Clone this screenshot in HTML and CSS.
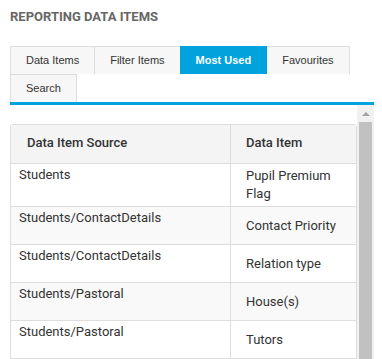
FILE: index.html
```html
<!DOCTYPE html>
<html lang="en">
<head>
  <meta charset="UTF-8"/>
  <title>Reporting Data Items</title>
  <link rel="stylesheet" href="styles.css">
</head>
<body>

  <div class="page">
    <h1 class="title">REPORTING DATA ITEMS</h1>

    <!-- tab strip -->
    <ul class="tabs">
      <li class="tab">Data Items</li>
      <li class="tab">Filter Items</li>
      <li class="tab active">Most Used</li>
      <li class="tab">Favourites</li>
      <li class="tab">Search</li>
    </ul>

    <div class="panel">
      <div class="panel-body">
        <table class="items">
          <colgroup>
            <col class="col-source">
            <col>
          </colgroup>
          <thead>
            <tr>
              <th>Data Item Source</th>
              <th>Data Item</th>
            </tr>
          </thead>
          <tbody>
            <tr>
              <td class="source">Students</td>
              <td class="item">Pupil Premium Flag</td>
            </tr>
            <tr>
              <td class="source">Students/ContactDetails</td>
              <td class="item">Contact Priority</td>
            </tr>
            <tr>
              <td class="source">Students/ContactDetails</td>
              <td class="item">Relation type</td>
            </tr>
            <tr>
              <td class="source">Students/Pastoral</td>
              <td class="item">House(s)</td>
            </tr>
            <tr>
              <td class="source">Students/Pastoral</td>
              <td class="item">Tutors</td>
            </tr>
          </tbody>
        </table>
      </div>
      <div class="scrollbar">
        <span class="scroll-up"></span>
        <span class="scroll-thumb"></span>
      </div>
    </div>
  </div>

</body>
</html>
```

FILE: styles.css
```css
html, body {
  margin: 0;
  padding: 0;
  background-color: #fff;
  overflow: hidden;
}
body {
  font-family: Roboto, Arial, sans-serif;
  color: #333;
}
.page {
  width: 364px;
  padding: 9px 8px 0 10px;
}
.title {
  margin: 0 0 21px 0;
  font-size: 13px;
  line-height: 16px;
  font-weight: 700;
  color: #666;
}

/* tabs */
.tabs {
  list-style: none;
  margin: 0;
  padding: 0;
  display: flex;
  flex-wrap: wrap;
  border-bottom: 3px solid #00a3dc;
}
.tab {
  font-family: "Liberation Sans", Arial, sans-serif;
  font-size: 11px;
  line-height: 27px;
  padding: 0 15px;
  margin-right: -1px;
  background-color: #f7f7f7;
  border: 1px solid #ddd;
  border-bottom: 0;
  color: #333;
}
.tab.active {
  background-color: #00a3dc;
  border-color: #00a3dc;
  color: #fff;
  font-weight: bold;
  position: relative;
}

/* scroll panel */
.panel {
  display: flex;
}
.panel-body {
  flex: 1;
  padding-top: 19px;
}
.scrollbar {
  width: 17px;
  height: 320px;
  background-color: #f1f1f1;
  display: flex;
  flex-direction: column;
}
.scroll-up {
  height: 17px;
  display: flex;
  align-items: center;
  justify-content: center;
}
.scroll-up::before {
  content: "";
  border-left: 4px solid transparent;
  border-right: 4px solid transparent;
  border-bottom: 4px solid #a3a3a3;
}
.scroll-thumb {
  flex: 1;
  margin: 0 2px;
  background-color: #c1c1c1;
}

/* table */
.items {
  width: 100%;
  table-layout: fixed;
  border-collapse: separate;
  border-spacing: 0;
  border: 1px solid #ddd;
  border-radius: 3px 3px 0 0;
  font-size: 13px;
  line-height: 18px;
}
.col-source {
  width: 220px;
}
.items th {
  text-align: left;
  font-weight: 500;
  padding: 9px 8px 11px 15px;
  background-color: #f4f4f4;
  border-bottom: 1px solid #ddd;
}
.items th:first-child {
  border-right: 1px solid #ddd;
  padding-left: 16px;
}
.items td {
  height: 31px;
  border-bottom: 1px solid #ddd;
}
.items tbody tr:nth-child(even) td {
  background-color: #f9f9f9;
}
.items td.source {
  vertical-align: top;
  padding: 2px 8px 0 8px;
  border-right: 1px solid #ddd;
}
.items td.item {
  vertical-align: middle;
  padding: 3px 8px 3px 15px;
}
```
